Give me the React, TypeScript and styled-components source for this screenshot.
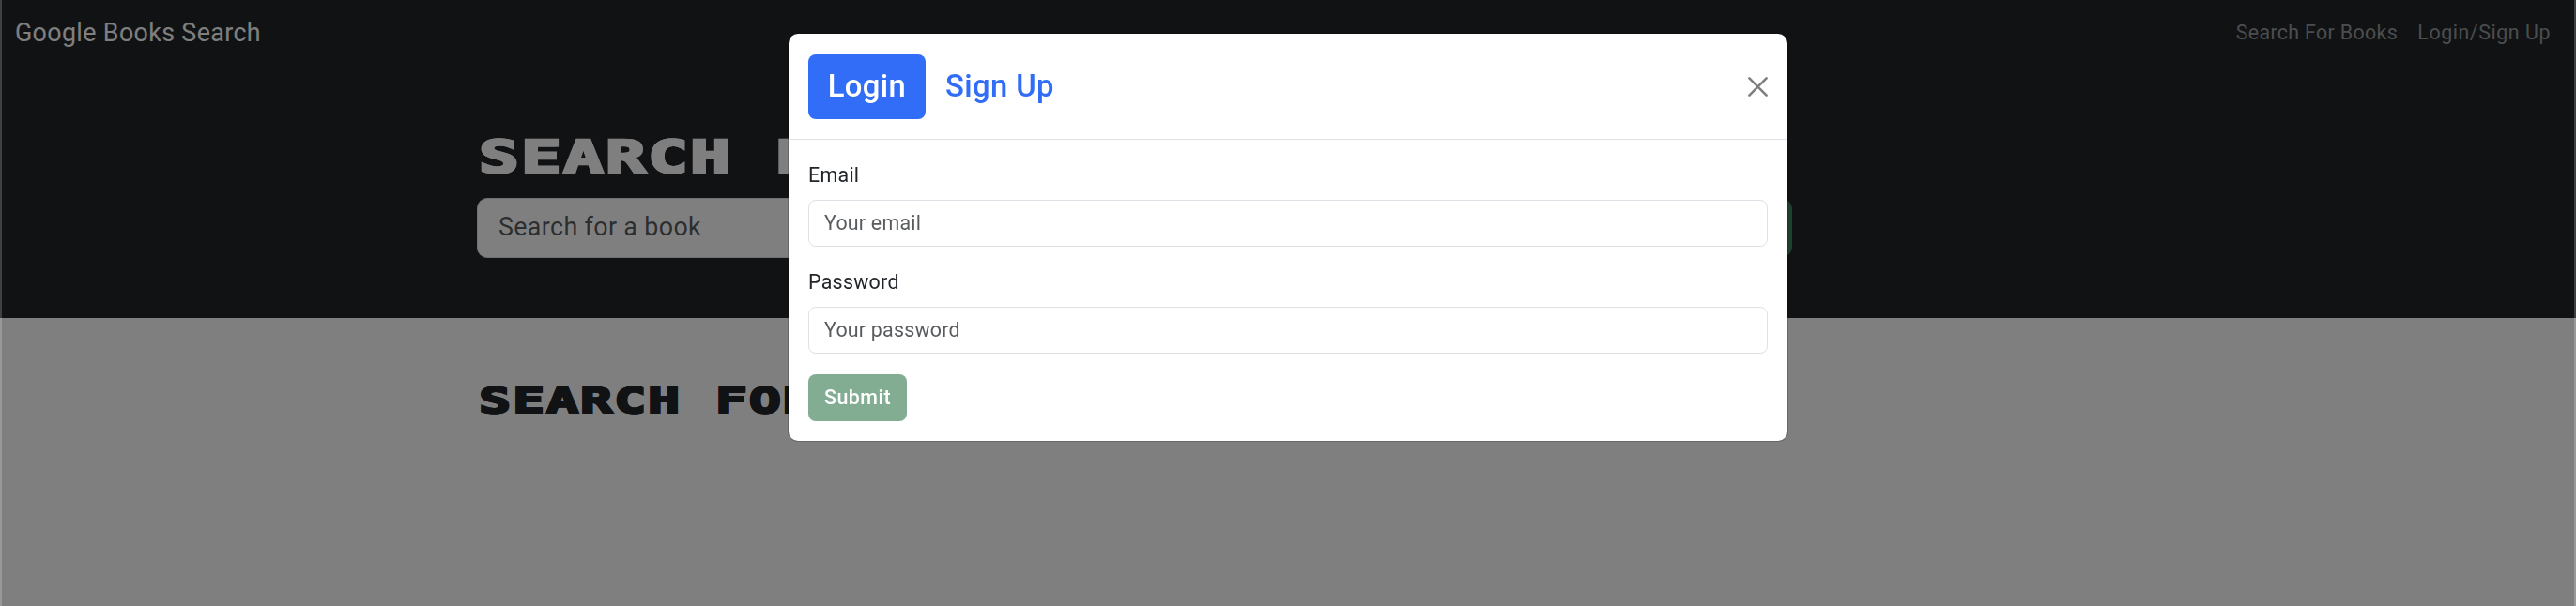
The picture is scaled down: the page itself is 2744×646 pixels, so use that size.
import React from 'react';
import styled, { createGlobalStyle } from 'styled-components';

const GlobalStyle = createGlobalStyle`
  *, *::before, *::after { box-sizing: border-box; }
  body {
    margin: 0;
    background: #fff;
    color: #212529;
    font: 400 21.4px/32px Roboto, "Liberation Sans", sans-serif;
    overflow: hidden;
  }
`;

const Page = styled.div`
  min-height: 646px;
`;

const Navbar = styled.nav`
  display: flex;
  align-items: center;
  justify-content: space-between;
  height: 70px;
  padding: 0 27px 0 16px;
  background: #212529;
`;

const Brand = styled.a`
  color: #fff;
  font-size: 26.8px;
  letter-spacing: 0.37px;
`;

const NavLinks = styled.div`
  display: flex;
  gap: 21.3px;
`;

const NavLink = styled.a<{ $spacing: number }>`
  color: rgba(255, 255, 255, 0.55);
  letter-spacing: ${(p) => p.$spacing}px;
`;

const Hero = styled.header`
  height: 269px;
  padding-top: 66px;
  background: #212529;
`;

const Container = styled.div`
  width: 1728px;
  margin: 0 auto;
`;

const DisplayTitle = styled.h1<{ $size: number }>`
  width: max-content;
  margin: 0 0 0 1.5px;
  font-family: "DejaVu Sans Mono", monospace;
  font-weight: 700;
  font-size: ${(p) => p.$size}px;
  line-height: ${(p) => p.$size * 1.333}px;
  letter-spacing: 0.031em;
  white-space: nowrap;
  text-transform: uppercase;
  -webkit-text-stroke: 0.055em currentColor;
  text-shadow: 0.018em 0.016em currentColor, -0.018em 0.016em currentColor,
    0.018em -0.016em currentColor, -0.018em -0.016em currentColor;
  transform: scaleX(1.5);
  transform-origin: left center;
`;

const HeroTitle = styled(DisplayTitle)`
  color: #fff;
  line-height: 64px;
  margin-bottom: 11px;
`;

const SearchRow = styled.form`
  display: grid;
  grid-template-columns: 1151px 250px;
`;

const SearchInput = styled.input`
  width: 1131px;
  height: 64px;
  padding: 0 22px 2px;
  border: 1px solid #dee2e6;
  border-radius: 11px;
  background: #fff;
  font: 400 26.8px Roboto, sans-serif;
  letter-spacing: 0.37px;
  &::placeholder { color: rgba(33, 37, 41, 0.75); opacity: 1; }
`;

const SearchButton = styled.button`
  height: 62px;
  align-self: center;
  border: 0;
  border-radius: 11px;
  background: #3f8158;
`;

const Results = styled.main`
  padding-top: 63px;
`;

const Backdrop = styled.div`
  position: fixed;
  inset: 0;
  display: flex;
  align-items: flex-start;
  justify-content: center;
  padding-top: 36px;
  background: rgba(0, 0, 0, 0.5);
`;

const WindowEdge = styled.div<{ $side: 'left' | 'right' }>`
  position: fixed;
  top: 0;
  bottom: 0;
  ${(p) => p.$side}: 0;
  width: 2px;
  background: rgba(255, 255, 255, 0.2);
`;

const Dialog = styled.section`
  width: 1064px;
  height: 434px;
  border-radius: 10px;
  background: #fff;
  box-shadow: 0 0 0 1px rgba(0, 0, 0, 0.18);
`;

const DialogHeader = styled.div`
  display: flex;
  align-items: center;
  justify-content: space-between;
  height: 113px;
  padding: 0 21px;
  border-bottom: 1px solid #dee2e6;
`;

const Tabs = styled.div`
  display: flex;
`;

const Tab = styled.button<{ $active?: boolean }>`
  height: 69px;
  width: ${(p) => (p.$active ? 125 : 158)}px;
  padding: 0;
  border: 0;
  border-radius: 8px;
  background: ${(p) => (p.$active ? '#316df6' : 'transparent')};
  color: ${(p) => (p.$active ? '#fff' : '#316df6')};
  font: 500 32.8px Roboto, sans-serif;
  letter-spacing: 0.4px;
`;

const CloseButton = styled.button`
  display: flex;
  padding: 0;
  border: 0;
  background: none;
  opacity: 0.5;
`;

const DialogBody = styled.form`
  padding: 22px 21px 21px;
`;

const Field = styled.div`
  display: flex;
  flex-direction: column;
  gap: 10px;
  margin-bottom: 22px;
`;

const Label = styled.label`
  letter-spacing: 0.28px;
`;

const Input = styled.input`
  height: 50px;
  padding: 0 16px 2px;
  border: 1px solid #dee2e6;
  border-radius: 8px;
  background: #fff;
  font: 400 21.4px Roboto, sans-serif;
  letter-spacing: 0.23px;
  &::placeholder { color: rgba(33, 37, 41, 0.75); opacity: 1; }
`;

const Submit = styled.button`
  display: block;
  width: 105px;
  height: 50px;
  padding: 0 0 1px;
  border: 0;
  border-radius: 8px;
  background: #82ad92;
  color: #fff;
  font: 500 21.4px Roboto, sans-serif;
  letter-spacing: 0.5px;
`;

export default function App() {
  return (
    <Page>
      <GlobalStyle />
      <Navbar>
        <Brand>Google Books Search</Brand>
        <NavLinks>
          <NavLink $spacing={0.33}>Search For Books</NavLink>
          <NavLink $spacing={0.55}>Login/Sign Up</NavLink>
        </NavLinks>
      </Navbar>
      <Hero>
        <Container>
          <HeroTitle $size={47.4}>Search F</HeroTitle>
          <SearchRow>
            <SearchInput placeholder="Search for a book" />
            <SearchButton type="button" aria-label="Search" />
          </SearchRow>
        </Container>
      </Hero>
      <Results>
        <Container>
          <DisplayTitle as="h2" $size={37.9}>Search for</DisplayTitle>
        </Container>
      </Results>
      <Backdrop>
        <Dialog role="dialog">
          <DialogHeader>
            <Tabs>
              <Tab $active>Login</Tab>
              <Tab>Sign Up</Tab>
            </Tabs>
            <CloseButton aria-label="Close">
              <svg width="21" height="21" viewBox="0 0 21 21" stroke="#000" strokeWidth="2.6" strokeLinecap="round">
                <path d="M1.4 1.4 19.6 19.6M19.6 1.4 1.4 19.6" />
              </svg>
            </CloseButton>
          </DialogHeader>
          <DialogBody>
            <Field>
              <Label>Email</Label>
              <Input placeholder="Your email" />
            </Field>
            <Field>
              <Label>Password</Label>
              <Input placeholder="Your password" />
            </Field>
            <Submit type="button">Submit</Submit>
          </DialogBody>
        </Dialog>
      </Backdrop>
      <WindowEdge $side="left" />
      <WindowEdge $side="right" />
    </Page>
  );
}
